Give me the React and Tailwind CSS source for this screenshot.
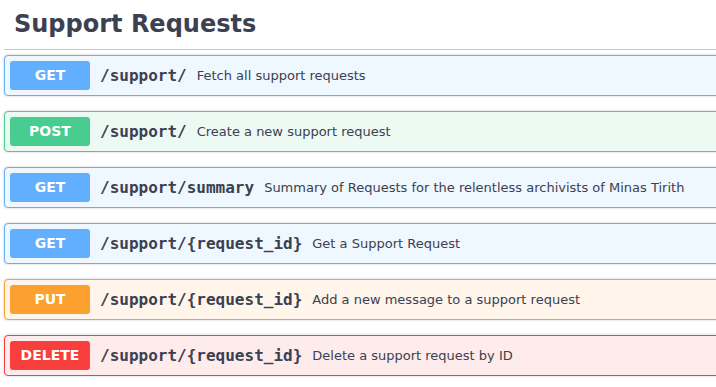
const endpoints = [
  { method: "GET", path: "/support/", summary: "Fetch all support requests" },
  { method: "POST", path: "/support/", summary: "Create a new support request" },
  {
    method: "GET",
    path: "/support/summary",
    summary: "Summary of Requests for the relentless archivists of Minas Tirith",
  },
  { method: "GET", path: "/support/{request_id}", summary: "Get a Support Request" },
  { method: "PUT", path: "/support/{request_id}", summary: "Add a new message to a support request" },
  { method: "DELETE", path: "/support/{request_id}", summary: "Delete a support request by ID" },
];

const styles = {
  GET: { block: "bg-[#eff7ff] border-[#61affe]", badge: "bg-[#61affe]" },
  POST: { block: "bg-[#edfaf4] border-[#49cc90]", badge: "bg-[#49cc90]" },
  PUT: { block: "bg-[#fff5ea] border-[#fca130]", badge: "bg-[#fca130]" },
  DELETE: { block: "bg-[#feebeb] border-[#f93e3e]", badge: "bg-[#f93e3e]" },
};

function Operation({ method, path, summary }) {
  const s = styles[method];
  return (
    <div
      className={`mb-[15px] flex items-center rounded border p-[5px] shadow-[0_0_3px_rgba(0,0,0,0.19)] ${s.block}`}
    >
      <span
        className={`flex h-[29px] min-w-[80px] items-center justify-center rounded-[3px] text-[14px] font-bold text-white ${s.badge}`}
      >
        {method}
      </span>
      <span className="px-[10px] font-['DejaVu_Sans_Mono',monospace] text-[16px] font-bold text-[#3b4151]">
        {path}
      </span>
      <span className="text-[13px] text-[#3b4151]">{summary}</span>
    </div>
  );
}

export default function App() {
  return (
    <div className="h-[387px] w-[716px] overflow-hidden bg-white font-['DejaVu_Sans',sans-serif]">
      <div className="w-[780px] pl-1">
        <h3 className="mb-[5px] border-b border-[rgba(59,65,81,0.3)] py-[10px] pl-[10px] text-[24px] font-bold leading-[29px] text-[#3b4151]">
          Support Requests
        </h3>
        {endpoints.map((op, i) => (
          <Operation key={i} {...op} />
        ))}
      </div>
    </div>
  );
}
